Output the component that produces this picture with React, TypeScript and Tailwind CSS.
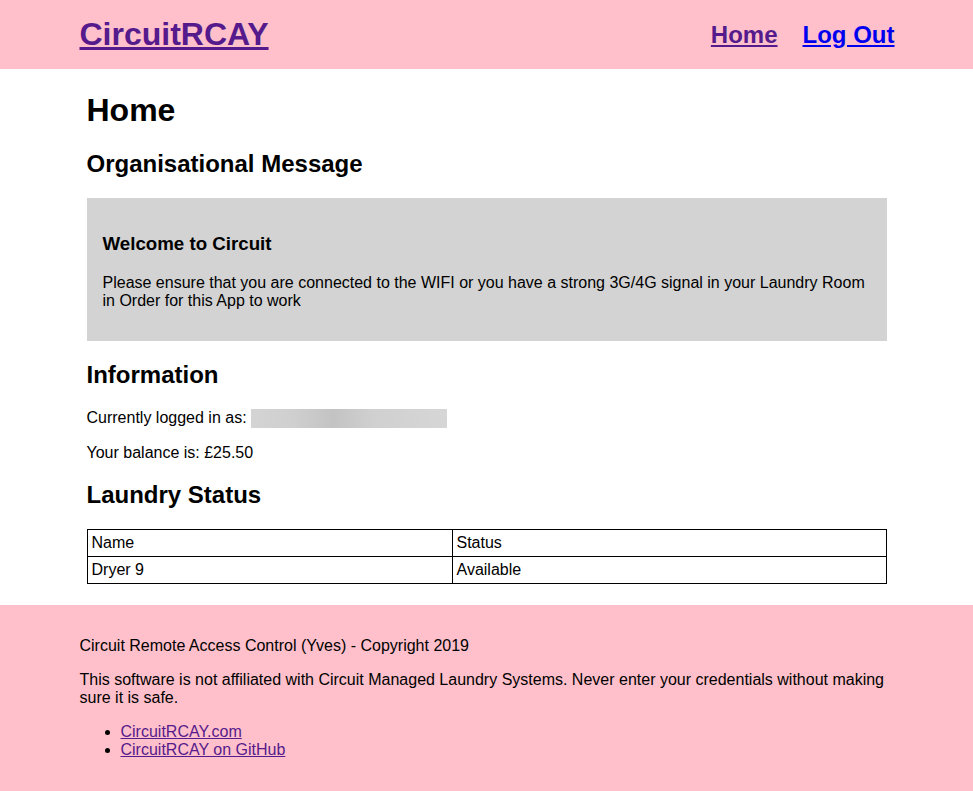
export default function App() {
  const machines = [{ name: "Dryer 9", status: "Available" }];

  return (
    <div className="min-h-screen bg-white text-black font-['Liberation_Sans',Arial,sans-serif] text-[16px] leading-[normal]">
      <header className="bg-[#ffc0cb] h-[69px]">
        <div className="w-[814px] mx-auto h-full flex items-center justify-between">
          <a href="#" className="text-[32px] font-bold text-[#551a8b] underline">
            CircuitRCAY
          </a>
          <nav className="flex gap-[25px] mr-[-1px] text-[24px] font-bold">
            <a href="#" className="text-[#551a8b] underline">Home</a>
            <a href="#" className="text-[#0000ee] underline">Log Out</a>
          </nav>
        </div>
      </header>

      <main className="w-[800px] mx-auto pb-[21px]">
        <h1 className="text-[32px] font-bold mt-[23px] mb-[21.44px]">Home</h1>
        <h2 className="text-[24px] font-bold mb-[19.92px]">Organisational Message</h2>

        <div className="bg-[#d3d3d3] px-4 pt-[34.7px] pb-[31px]">
          <h3 className="text-[18.72px] font-bold mb-[18.72px]">Welcome to Circuit</h3>
          <p>
            Please ensure that you are connected to the WIFI or you have a strong 3G/4G signal in your Laundry Room
            in Order for this App to work
          </p>
        </div>

        <h2 className="text-[24px] font-bold my-[19.92px]">Information</h2>
        <p className="flex items-center">
          Currently logged in as:&nbsp;
          <span className="inline-block w-[196px] h-[19px] bg-[linear-gradient(90deg,#d4d4d4_0%,#cfcfcf_22%,#c3c3c3_42%,#d0d0d0_62%,#d6d6d6_100%)]" />
        </p>
        <p className="mt-4">Your balance is: £25.50</p>

        <h2 className="text-[24px] font-bold my-[19.92px]">Laundry Status</h2>
        <table className="w-full border-collapse">
          <tbody>
            <tr>
              <td className="border border-black px-1 py-1 w-[365px]">Name</td>
              <td className="border border-black px-1 py-1">Status</td>
            </tr>
            {machines.map((m) => (
              <tr key={m.name}>
                <td className="border border-black px-1 py-1">{m.name}</td>
                <td className="border border-black px-1 py-1">{m.status}</td>
              </tr>
            ))}
          </tbody>
        </table>
      </main>

      <footer className="bg-[#ffc0cb] py-4">
        <div className="w-[814px] mx-auto">
          <p className="my-4">Circuit Remote Access Control (Yves) - Copyright 2019</p>
          <p className="my-4">
            This software is not affiliated with Circuit Managed Laundry Systems. Never enter your credentials without
            making sure it is safe.
          </p>
          <ul className="list-disc pl-[41px] my-4">
            <li>
              <a href="#" className="text-[#551a8b] underline">CircuitRCAY.com</a>
            </li>
            <li>
              <a href="#" className="text-[#551a8b] underline">CircuitRCAY on GitHub</a>
            </li>
          </ul>
        </div>
      </footer>
    </div>
  );
}
